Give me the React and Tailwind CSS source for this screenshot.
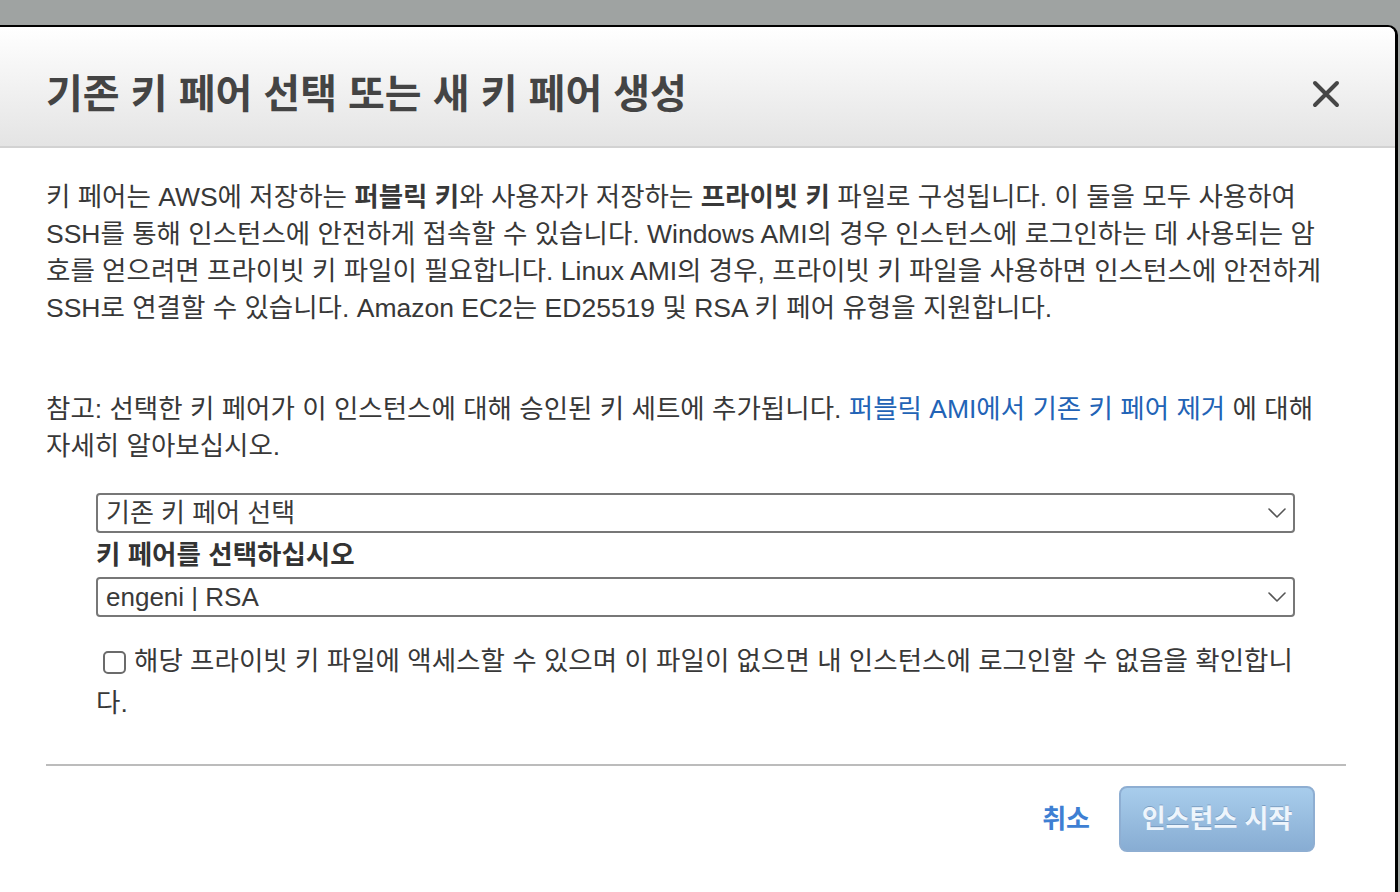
import React, { useState } from 'react';

const font = { fontFamily: '"Liberation Sans", "Noto Sans CJK KR", sans-serif' };

const Chevron = () => (
  <svg width="18" height="10" viewBox="0 0 18 10" fill="none" className="shrink-0">
    <path d="M1 1l8 8 8-8" stroke="#555" strokeWidth="1.6" strokeLinecap="round" strokeLinejoin="round" />
  </svg>
);

const Select = ({ value }) => (
  <div className="flex h-[40px] w-[1199px] items-center justify-between rounded-[4px] border-2 border-[#777] bg-white pl-[8px] pr-[7px] text-[26px] text-[#3a3a3a]">
    <span>{value}</span>
    <Chevron />
  </div>
);

const App = () => {
  const [agreed, setAgreed] = useState(false);

  return (
    <div className="min-h-screen overflow-hidden bg-[#9fa3a2] pt-[25px]" style={font}>
      <div className="h-[900px] w-[1398px] rounded-tr-[10px] border-t-2 border-r-[3px] border-black bg-white">
        {/* Header */}
        <div className="flex h-[121px] items-center justify-between rounded-tr-[8px] border-b-2 border-[#d2d2d2] bg-gradient-to-b from-white to-[#e4e4e4] pl-[46px] pr-[54px] pt-[14px]">
          <h1 className="text-[40px] font-bold text-[#444]">기존 키 페어 선택 또는 새 키 페어 생성</h1>
          <button className="flex h-[30px] w-[30px] items-center justify-center">
            <svg width="28" height="28" viewBox="0 0 28 28">
              <path d="M3 3l22 22M25 3L3 25" stroke="#464646" strokeWidth="4" strokeLinecap="round" />
            </svg>
          </button>
        </div>

        {/* Body */}
        <div className="pl-[46px] pr-[50px] pt-[31px] text-[26.5px] leading-[37px] text-[#383838]">
          <p>
            키 페어는 AWS에 저장하는 <b>퍼블릭 키</b>와 사용자가 저장하는 <b>프라이빗 키</b> 파일로 구성됩니다. 이 둘을 모두 사용하여
            <br />
            SSH를 통해 인스턴스에 안전하게 접속할 수 있습니다. Windows AMI의 경우 인스턴스에 로그인하는 데 사용되는 암
            <br />
            호를 얻으려면 프라이빗 키 파일이 필요합니다. Linux AMI의 경우, 프라이빗 키 파일을 사용하면 인스턴스에 안전하게
            <br />
            SSH로 연결할 수 있습니다. Amazon EC2는 ED25519 및 RSA 키 페어 유형을 지원합니다.
          </p>
          <p className="mt-[64px]">
            참고: 선택한 키 페어가 이 인스턴스에 대해 승인된 키 세트에 추가됩니다.{' '}
            <a href="#" className="text-[#2263b6]">퍼블릭 AMI에서 기존 키 페어 제거</a> 에 대해
            <br />
            자세히 알아보십시오.
          </p>

          <div className="ml-[50px] mt-[28px]">
            <Select value="기존 키 페어 선택" />
            <div className="flex h-[44px] items-center font-bold text-[#333]">키 페어를 선택하십시오</div>
            <Select value="engeni | RSA" />
            <p className="mt-[23px] w-[1205px] leading-[42px]">
              <label className="cursor-pointer">
                <input
                  type="checkbox"
                  checked={agreed}
                  onChange={() => setAgreed(!agreed)}
                  className="ml-[7px] mr-[8px] inline-block h-[23px] w-[23px] appearance-none rounded-[5px] border-2 border-[#6b6b6b] bg-white align-[-4px] checked:bg-[#2263b6]"
                />
                해당 프라이빗 키 파일에 액세스할 수 있으며 이 파일이 없으면 내 인스턴스에 로그인할 수 없음을 확인합니
                <br />
                다.
              </label>
            </p>
          </div>

          <div className="mt-[40px] h-[2px] w-[1300px] bg-[#bcbcbc]" />

          {/* Footer */}
          <div className="flex w-[1269px] items-center justify-end gap-[29px] pt-[20px]">
            <button className="text-[26px] font-bold text-[#3e7fd3]">취소</button>
            <button className="h-[66px] w-[196px] rounded-[8px] border-2 border-[#8eaed2] bg-gradient-to-b from-[#a8cdec] to-[#88add3] text-[26px] font-bold text-[#eef5fc] [text-shadow:0_-1px_0_rgba(60,90,130,0.35)]">
              인스턴스 시작
            </button>
          </div>
        </div>
      </div>
    </div>
  );
};

export default App;
